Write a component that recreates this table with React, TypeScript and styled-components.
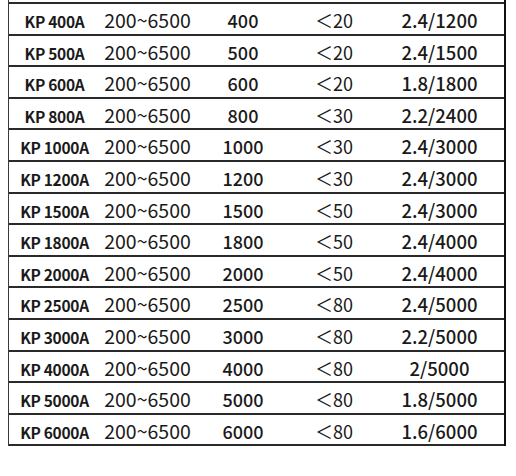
import React from 'react';
import styled, { createGlobalStyle } from 'styled-components';

type Row = [string, string, string, string, string];

const rows: Row[] = [
  ['KP 400A', '200~6500', '400', '＜20', '2.4/1200'],
  ['KP 500A', '200~6500', '500', '＜20', '2.4/1500'],
  ['KP 600A', '200~6500', '600', '＜20', '1.8/1800'],
  ['KP 800A', '200~6500', '800', '＜30', '2.2/2400'],
  ['KP 1000A', '200~6500', '1000', '＜30', '2.4/3000'],
  ['KP 1200A', '200~6500', '1200', '＜30', '2.4/3000'],
  ['KP 1500A', '200~6500', '1500', '＜50', '2.4/3000'],
  ['KP 1800A', '200~6500', '1800', '＜50', '2.4/4000'],
  ['KP 2000A', '200~6500', '2000', '＜50', '2.4/4000'],
  ['KP 2500A', '200~6500', '2500', '＜80', '2.4/5000'],
  ['KP 3000A', '200~6500', '3000', '＜80', '2.2/5000'],
  ['KP 4000A', '200~6500', '4000', '＜80', '2/5000'],
  ['KP 5000A', '200~6500', '5000', '＜80', '1.8/5000'],
  ['KP 6000A', '200~6500', '6000', '＜80', '1.6/6000'],
];

const GlobalStyle = createGlobalStyle`
  body {
    margin: 0;
    background: #fff;
    font-family: "Noto Sans CJK SC", "Noto Sans", sans-serif;
    color: #1a1a1a;
  }
`;

export default function App() {
  return (
    <>
      <GlobalStyle />
      <Page>
        <Table>
          {rows.map((row, i) => (
            <TableRow key={row[0]} last={i === rows.length - 1}>
              <Model>{row[0]}</Model>
              <Range>{row[1]}</Range>
              <Current>{row[2]}</Current>
              <Limit>{row[3]}</Limit>
              <Ratio>{row[4]}</Ratio>
            </TableRow>
          ))}
        </Table>
      </Page>
    </>
  );
}

const Page = styled.div`
  width: 516px;
  height: 476px;
  background: #fff;
  padding-left: 8px;
  box-sizing: border-box;
`;

const Table = styled.div`
  width: 498px;
  padding-top: 2px;
  border-left: 1px solid #3a3a3a;
  border-right: 2px solid #111;
  box-sizing: border-box;
`;

const TableRow = styled.div<{ last?: boolean }>`
  display: grid;
  grid-template-columns: 91px 95px 96px 86px 1fr;
  align-items: baseline;
  height: ${({ last }) => (last ? '33.6px' : '31.6px')};
  border-top: 2px solid #2a2a2a;
  border-bottom: ${({ last }) => (last ? '2px solid #2a2a2a' : 'none')};
  box-sizing: border-box;
  text-align: center;
  white-space: nowrap;
  padding-top: 6px;
`;

const Cell = styled.span`
  display: block;
  line-height: 1;
`;

const Model = styled(Cell)`
  font-size: 15.5px;
  font-weight: 600;
  letter-spacing: -0.3px;
`;

const Range = styled(Cell)`
  font-size: 19.5px;
  font-weight: 400;
`;

const Current = styled(Cell)`
  font-size: 18px;
  font-weight: 500;
`;

const Limit = styled(Cell)`
  font-size: 18px;
  font-weight: 400;
`;

const Ratio = styled(Cell)`
  font-size: 18.5px;
  font-weight: 500;
  padding-right: 2px;
`;
